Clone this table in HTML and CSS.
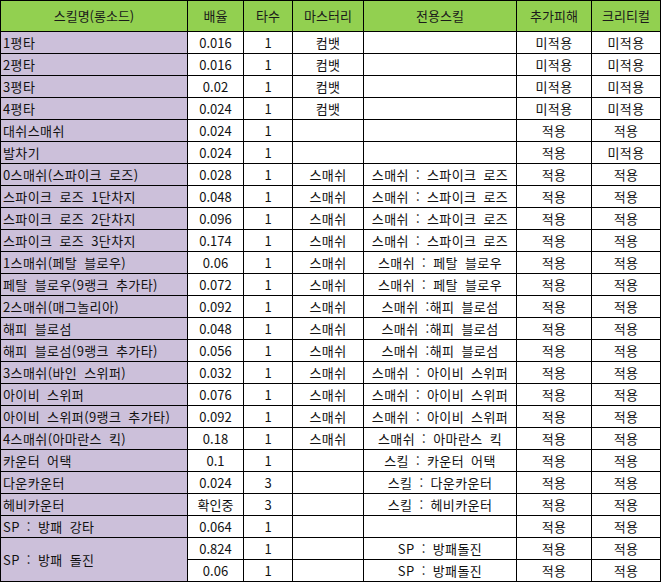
FILE: index.html
```html
<!DOCTYPE html>
<html lang="ko">
<head>
<meta charset="utf-8">
<title>스킬 배율</title>
<link rel="stylesheet" href="styles.css">
</head>
<body>
<table class="sheet">
  <colgroup>
    <col class="c-name"><col class="c-rate"><col class="c-hit"><col class="c-mastery"><col class="c-skill"><col class="c-extra"><col class="c-crit">
  </colgroup>
  <thead>
    <tr class="head">
      <th>스킬명(롱소드)</th><th>배율</th><th>타수</th><th>마스터리</th><th>전용스킬</th><th>추가피해</th><th>크리티컬</th>
    </tr>
  </thead>
  <tbody>
    <tr><td class="name">1평타</td><td class="num">0.016</td><td class="num">1</td><td>컴뱃</td><td></td><td>미적용</td><td>미적용</td></tr>
    <tr><td class="name">2평타</td><td class="num">0.016</td><td class="num">1</td><td>컴뱃</td><td></td><td>미적용</td><td>미적용</td></tr>
    <tr><td class="name">3평타</td><td class="num">0.02</td><td class="num">1</td><td>컴뱃</td><td></td><td>미적용</td><td>미적용</td></tr>
    <tr><td class="name">4평타</td><td class="num">0.024</td><td class="num">1</td><td>컴뱃</td><td></td><td>미적용</td><td>미적용</td></tr>
    <tr><td class="name">대쉬스매쉬</td><td class="num">0.024</td><td class="num">1</td><td></td><td></td><td>적용</td><td>적용</td></tr>
    <tr><td class="name">발차기</td><td class="num">0.024</td><td class="num">1</td><td></td><td></td><td>적용</td><td>미적용</td></tr>
    <tr><td class="name">0스매쉬(스파이크 로즈)</td><td class="num">0.028</td><td class="num">1</td><td>스매쉬</td><td>스매쉬 : 스파이크 로즈</td><td>적용</td><td>적용</td></tr>
    <tr><td class="name">스파이크 로즈 1단차지</td><td class="num">0.048</td><td class="num">1</td><td>스매쉬</td><td>스매쉬 : 스파이크 로즈</td><td>적용</td><td>적용</td></tr>
    <tr><td class="name">스파이크 로즈 2단차지</td><td class="num">0.096</td><td class="num">1</td><td>스매쉬</td><td>스매쉬 : 스파이크 로즈</td><td>적용</td><td>적용</td></tr>
    <tr><td class="name">스파이크 로즈 3단차지</td><td class="num">0.174</td><td class="num">1</td><td>스매쉬</td><td>스매쉬 : 스파이크 로즈</td><td>적용</td><td>적용</td></tr>
    <tr><td class="name">1스매쉬(페탈 블로우)</td><td class="num">0.06</td><td class="num">1</td><td>스매쉬</td><td>스매쉬 : 페탈 블로우</td><td>적용</td><td>적용</td></tr>
    <tr><td class="name">페탈 블로우(9랭크 추가타)</td><td class="num">0.072</td><td class="num">1</td><td>스매쉬</td><td>스매쉬 : 페탈 블로우</td><td>적용</td><td>적용</td></tr>
    <tr><td class="name">2스매쉬(매그놀리아)</td><td class="num">0.092</td><td class="num">1</td><td>스매쉬</td><td>스매쉬 :해피 블로섬</td><td>적용</td><td>적용</td></tr>
    <tr><td class="name">해피 블로섬</td><td class="num">0.048</td><td class="num">1</td><td>스매쉬</td><td>스매쉬 :해피 블로섬</td><td>적용</td><td>적용</td></tr>
    <tr><td class="name">해피 블로섬(9랭크 추가타)</td><td class="num">0.056</td><td class="num">1</td><td>스매쉬</td><td>스매쉬 :해피 블로섬</td><td>적용</td><td>적용</td></tr>
    <tr><td class="name">3스매쉬(바인 스위퍼)</td><td class="num">0.032</td><td class="num">1</td><td>스매쉬</td><td>스매쉬 : 아이비 스위퍼</td><td>적용</td><td>적용</td></tr>
    <tr><td class="name">아이비 스위퍼</td><td class="num">0.076</td><td class="num">1</td><td>스매쉬</td><td>스매쉬 : 아이비 스위퍼</td><td>적용</td><td>적용</td></tr>
    <tr><td class="name">아이비 스위퍼(9랭크 추가타)</td><td class="num">0.092</td><td class="num">1</td><td>스매쉬</td><td>스매쉬 : 아이비 스위퍼</td><td>적용</td><td>적용</td></tr>
    <tr><td class="name">4스매쉬(아마란스 킥)</td><td class="num">0.18</td><td class="num">1</td><td>스매쉬</td><td>스매쉬 : 아마란스 킥</td><td>적용</td><td>적용</td></tr>
    <tr><td class="name">카운터 어택</td><td class="num">0.1</td><td class="num">1</td><td></td><td>스킬 : 카운터 어택</td><td>적용</td><td>적용</td></tr>
    <tr><td class="name">다운카운터</td><td class="num">0.024</td><td class="num">3</td><td></td><td>스킬 : 다운카운터</td><td>적용</td><td>적용</td></tr>
    <tr><td class="name">헤비카운터</td><td class="num">확인중</td><td class="num">3</td><td></td><td>스킬 : 헤비카운터</td><td>적용</td><td>적용</td></tr>
    <tr><td class="name">SP : 방패 강타</td><td class="num">0.064</td><td class="num">1</td><td></td><td></td><td>적용</td><td>적용</td></tr>
    <tr><td class="name" rowspan="2">SP : 방패 돌진</td><td class="num">0.824</td><td class="num">1</td><td></td><td>SP : 방패돌진</td><td>적용</td><td>적용</td></tr>
    <tr><td class="num">0.06</td><td class="num">1</td><td></td><td>SP : 방패돌진</td><td>적용</td><td>적용</td></tr>
  </tbody>
</table>
</body>
</html>
```

FILE: styles.css
```css
html, body {
  margin: 0;
  padding: 0;
  background: #ffffff;
}

.sheet {
  border-collapse: collapse;
  table-layout: fixed;
  width: 661px;
  font-family: "Noto Sans CJK KR", "Noto Sans", sans-serif;
  font-size: 13px;
  color: #111111;
}

.c-name { width: 187px; }
.c-rate { width: 56px; }
.c-hit { width: 49px; }
.c-mastery { width: 71px; }
.c-skill { width: 153px; }
.c-extra { width: 75px; }
.c-crit { width: 69px; }

.sheet th,
.sheet td {
  border: 1px solid #000000;
  padding: 0;
  text-align: center;
  vertical-align: middle;
  white-space: nowrap;
  overflow: hidden;
  line-height: 16px;
}

.sheet th {
  height: 30px;
  background: #92d050;
  font-weight: normal;
  color: #1a1a1a;
}

.sheet td {
  height: 21px;
  letter-spacing: 0.4px;
  word-spacing: 3px;
}

.sheet td.num {
  letter-spacing: 0;
  word-spacing: 0;
}

.sheet td.name {
  background: #ccc0da;
  text-align: left;
  padding-left: 2px;
}
```
